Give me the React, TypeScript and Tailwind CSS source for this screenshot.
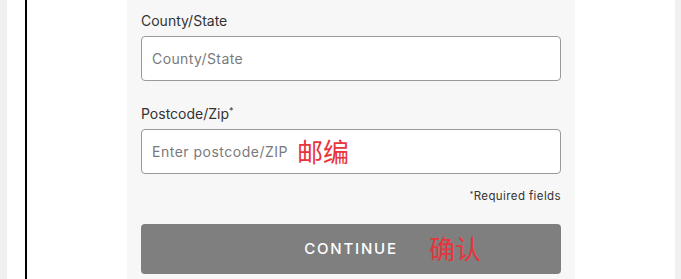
import React from "react";

export default function App() {
  const font = { fontFamily: "Inter, 'Noto Sans', sans-serif" };
  return (
    <div className="flex h-[279px] w-[681px] overflow-hidden bg-white" style={font}>
      <div className="w-[7px] shrink-0 bg-[#f0f0f0]" />
      <div className="w-[18px] shrink-0 bg-white" />
      <div className="w-[2px] shrink-0 bg-black" />
      <div className="w-[100px] shrink-0 bg-white" />
      <div className="w-[448px] shrink-0 bg-[#f7f7f7] px-[14px] pt-[11px]">
        <div className="h-[20px] text-[14px] leading-[20px] text-[#333]">County/State</div>
        <input
          className="mt-[5px] block h-[45px] w-[420px] rounded-[4px] border border-[#9a9a9a] bg-white px-[10px] text-[14px] tracking-[0.4px] text-[#333] placeholder:text-[#7a7a7a] outline-none"
          placeholder="County/State"
        />
        <div className="mt-[23px] h-[20px] text-[14px] leading-[20px] text-[#333]">
          Postcode/Zip<span className="relative top-[-5px] text-[9px]">*</span>
        </div>
        <div className="relative mt-[5px] h-[45px] w-[420px]">
          <input
            className="block h-[45px] w-[420px] rounded-[4px] border border-[#9a9a9a] bg-white px-[10px] text-[14px] tracking-[0.5px] text-[#333] placeholder:text-[#7a7a7a] outline-none"
            placeholder="Enter postcode/ZIP"
          />
          <span
            className="absolute left-[156px] top-[6px] text-[26px] leading-[32px] text-[#e8343c]"
            style={{ fontFamily: "'Noto Sans CJK SC', sans-serif" }}
          >
            邮编
          </span>
        </div>
        <div className="mt-[14px] flex h-[16px] w-[420px] justify-end text-[11.5px] leading-[16px] tracking-[0.4px] text-[#333]">
          <span>
            <span className="relative top-[-3px] text-[7px]">*</span>Required fields
          </span>
        </div>
        <button className="relative mt-[20px] block h-[50px] w-[420px] rounded-[4px] bg-[#7f7f7f] text-[15px] font-medium tracking-[1.8px] text-white">
          CONTINUE
          <span
            className="absolute left-[288px] top-[8px] text-[26px] font-normal leading-[32px] tracking-normal text-[#e8343c]"
            style={{ fontFamily: "'Noto Sans CJK SC', sans-serif" }}
          >
            确认
          </span>
        </button>
      </div>
      <div className="w-[100px] shrink-0 bg-white" />
      <div className="w-[6px] shrink-0 bg-[#f0f0f0]" />
    </div>
  );
}
